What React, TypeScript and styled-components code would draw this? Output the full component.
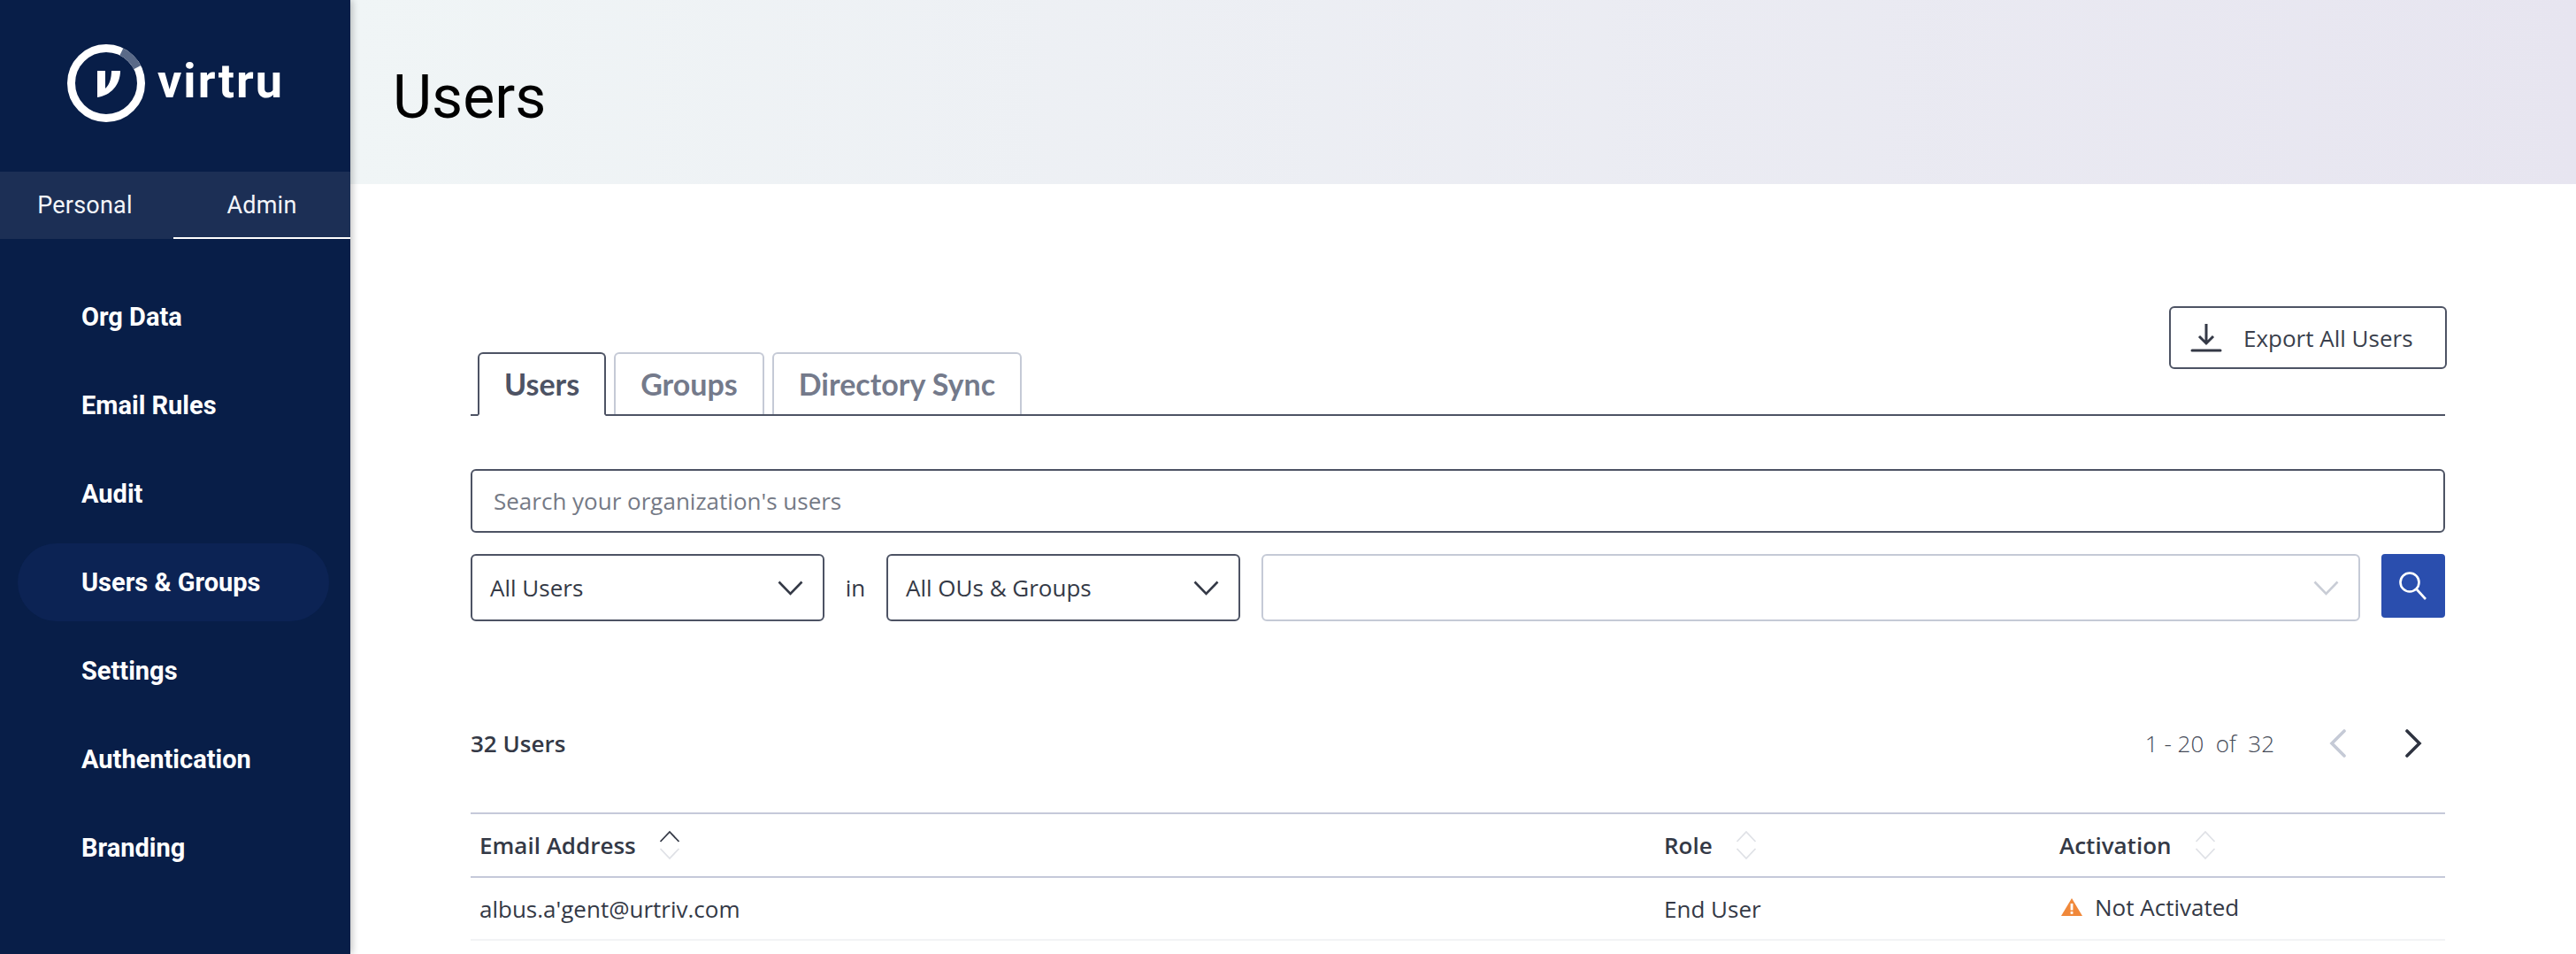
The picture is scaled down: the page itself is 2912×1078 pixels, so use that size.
import React from 'react';
import styled, { createGlobalStyle } from 'styled-components';

const GlobalStyle = createGlobalStyle`
  html, body {
    margin: 0;
    padding: 0;
    height: 100%;
    overflow: hidden;
    background: #fff;
  }
  * { box-sizing: border-box; }
`;

const font = {
  nav: `Roboto, "Liberation Sans", sans-serif`,
  body: `"Open Sans", "Liberation Sans", sans-serif`,
  tab: `Lato, "Open Sans", sans-serif`,
};

const Page = styled.div`
  display: flex;
  width: 2912px;
  height: 1078px;
  overflow: hidden;
`;

const Sidebar = styled.aside`
  position: relative;
  z-index: 1;
  flex: 0 0 396px;
  background: #081e48;
  box-shadow: 2px 0 8px rgba(0, 0, 0, 0.25);
  color: #fff;
`;

const LogoWrap = styled.div`
  display: flex;
  align-items: center;
  height: 194px;
  padding: 0 0 6px 76px;
  gap: 14px;
`;

const Wordmark = styled.span`
  font: 700 54px/1 ${font.nav};
  letter-spacing: 2px;
  color: #fff;
  margin-top: -4px;
`;

const ModeTabs = styled.div`
  display: flex;
  height: 76px;
  background: #1c2f55;
`;

const ModeTab = styled.div<{ $active?: boolean }>`
  flex: 0 0 ${(p) => (p.$active ? '200px' : '192px')};
  display: flex;
  align-items: center;
  justify-content: center;
  padding-top: 2px;
  font: 400 27px/1 ${font.nav};
  letter-spacing: 0.2px;
  color: #f3f5f9;
  border-bottom: 2px solid ${(p) => (p.$active ? '#fff' : 'transparent')};
  margin-left: ${(p) => (p.$active ? '4px' : '0')};
`;

const Nav = styled.nav`
  display: flex;
  flex-direction: column;
  gap: 12px;
  padding: 44px 24px 0 20px;
`;

const NavItem = styled.a<{ $active?: boolean }>`
  display: flex;
  align-items: center;
  height: 88px;
  padding-left: 72px;
  border-radius: 44px;
  background: ${(p) => (p.$active ? '#0c2354' : 'transparent')};
  font: 700 29px/1 ${font.nav};
  color: #fff;
`;

const Main = styled.main`
  flex: 1;
  min-width: 0;
`;

const Header = styled.header`
  display: flex;
  align-items: center;
  height: 208px;
  padding: 11px 0 0 48px;
  background: linear-gradient(90deg, #f0f5f6 0%, #e7e5f0 100%);
`;

const Title = styled.h1`
  margin: 0;
  font: 400 68px/1 ${font.nav};
  color: #000;
`;

const Content = styled.div`
  padding: 138px 148px 0 136px;
`;

const TabRow = styled.div`
  display: flex;
  justify-content: space-between;
  align-items: flex-start;
  height: 124px;
  padding-left: 8px;
  border-bottom: 2px solid #4d5364;
`;

const Tabs = styled.div`
  display: flex;
  gap: 9px;
  margin-top: 52px;
`;

const Tab = styled.div<{ $active?: boolean }>`
  display: flex;
  align-items: center;
  justify-content: center;
  height: ${(p) => (p.$active ? '72px' : '70px')};
  padding: 0 28px;
  border: 2px solid ${(p) => (p.$active ? '#4d5364' : '#c5cad6')};
  border-bottom: ${(p) => (p.$active ? '2px solid #fff' : 'none')};
  border-radius: 6px 6px 0 0;
  background: #fff;
  font: 700 34px/1 ${font.tab};
  color: ${(p) => (p.$active ? '#4d5364' : '#747a8b')};
`;

const ExportButton = styled.button`
  display: flex;
  align-items: center;
  gap: 24px;
  width: 314px;
  height: 71px;
  margin-right: -2px;
  padding: 0 0 0 22px;
  border: 2px solid #4d5364;
  border-radius: 6px;
  background: #fff;
  font: 400 26px/1 ${font.body};
  color: #3a3f4c;
`;

const SearchBox = styled.div`
  display: flex;
  align-items: center;
  height: 72px;
  margin-top: 60px;
  padding-left: 24px;
  border: 2px solid #4d5364;
  border-radius: 6px;
  font: 400 26px/1 ${font.body};
  color: #757a86;
`;

const Filters = styled.div`
  display: flex;
  align-items: flex-start;
  margin-top: 24px;
`;

const Select = styled.div<{ $muted?: boolean; $grow?: boolean }>`
  display: flex;
  align-items: center;
  justify-content: space-between;
  flex: ${(p) => (p.$grow ? '1' : '0 0 400px')};
  height: 76px;
  padding: 0 22px 0 20px;
  border: 2px solid ${(p) => (p.$muted ? '#c5cad6' : '#4d5364')};
  border-radius: 6px;
  font: 400 26px/1 ${font.body};
  color: #343946;
`;

const InLabel = styled.span`
  flex: 0 0 70px;
  font: 400 26px/76px ${font.body};
  text-align: center;
  color: #343946;
`;

const FilterSpacer = styled.span`
  flex: 0 0 24px;
`;

const SearchButton = styled.button`
  display: flex;
  align-items: center;
  justify-content: center;
  flex: 0 0 72px;
  height: 72px;
  margin-left: 24px;
  padding: 0;
  border: 0;
  border-radius: 4px;
  background: #2a4eae;
`;

const MetaRow = styled.div`
  display: flex;
  align-items: center;
  justify-content: space-between;
  height: 72px;
  margin: 102px 0 42px;
  padding-right: 26px;
`;

const Count = styled.span`
  font: 600 26px/1 ${font.body};
  color: #343946;
`;

const Pager = styled.div`
  display: flex;
  align-items: center;
`;

const PagerText = styled.span`
  margin-right: 62px;
  font: 300 26px/1 ${font.body};
  color: #454a57;
`;

const PagerGap = styled.span`
  width: 65px;
`;

const TableRow = styled.div<{ $head?: boolean }>`
  display: grid;
  grid-template-columns: 1339px 447px 1fr;
  align-items: center;
  height: ${(p) => (p.$head ? '74px' : '71px')};
  padding-left: 10px;
  border-top: ${(p) => (p.$head ? '2px solid #c5c9d9' : 'none')};
  border-bottom: 2px solid ${(p) => (p.$head ? '#c5c9d9' : '#f2f3f5')};
`;

const HeadCell = styled.div`
  display: flex;
  align-items: center;
  gap: 26px;
  font: 600 26px/1 ${font.body};
  color: #343946;
`;

const Cell = styled.div`
  font: 400 26px/1 ${font.body};
  color: #343946;
`;

const StatusCell = styled(Cell)`
  display: flex;
  align-items: center;
  gap: 14px;
  margin-top: -3px;
  padding-left: 2px;
`;

const Chevron = ({ color }: { color: string }) => (
  <svg width="29" height="17" viewBox="0 0 29 17" fill="none">
    <path d="M1.5 1.5 L14.5 15 L27.5 1.5" stroke={color} strokeWidth="2.6" />
  </svg>
);

const SortIcon = ({ up }: { up?: boolean }) => (
  <svg width="24" height="34" viewBox="0 0 24 34" fill="none">
    <path d="M1.5 13 L12 2 L22.5 13" stroke={up ? '#343946' : '#dfe1e6'} strokeWidth="1.8" />
    <path d="M1.5 21 L12 32 L22.5 21" stroke="#dfe1e6" strokeWidth="1.8" />
  </svg>
);

const Logo = () => (
  <svg width="88" height="88" viewBox="0 0 88 88" fill="none">
    <circle cx="44" cy="44" r="39.5" stroke="#fff" strokeWidth="9" />
    <path d="M61.35 8.5 A39.5 39.5 0 0 1 79.2 26.15" stroke="#5a6a88" strokeWidth="9" />
    <path d="M34 30 H43 V50 C48 46 50 38 50 30 H60 C60 46 49 58 34 60 Z" fill="#fff" />
  </svg>
);

const ExportIcon = () => (
  <svg width="36" height="34" viewBox="0 0 36 34" fill="none">
    <path d="M18 1 V22 M10 15 L18 23 L26 15" stroke="#343946" strokeWidth="3" />
    <path d="M2 31 H34" stroke="#343946" strokeWidth="3" strokeLinecap="round" />
  </svg>
);

const SearchIcon = () => (
  <svg width="34" height="34" viewBox="0 0 34 34" fill="none">
    <circle cx="13" cy="13" r="10.5" stroke="#fff" strokeWidth="2.6" />
    <path d="M20.5 20.5 L31 32" stroke="#fff" strokeWidth="2.6" />
  </svg>
);

const PagerArrow = ({ dir, color }: { dir: 'left' | 'right'; color: string }) => (
  <svg width="20" height="32" viewBox="0 0 20 32" fill="none">
    <path
      d={dir === 'left' ? 'M17 2 L3 16 L17 30' : 'M3 2 L17 16 L3 30'}
      stroke={color}
      strokeWidth="3.6"
      strokeLinecap="round"
    />
  </svg>
);

const WarningIcon = () => (
  <svg width="24" height="20" viewBox="0 0 24 20">
    <path d="M12 0 L24 20 H0 Z" fill="#f0883a" />
    <rect x="10.6" y="6" width="2.8" height="7.5" fill="#fff" />
    <rect x="10.6" y="15" width="2.8" height="2.8" fill="#fff" />
  </svg>
);

const navItems = ['Org Data', 'Email Rules', 'Audit', 'Users & Groups', 'Settings', 'Authentication', 'Branding'];

const App: React.FC = () => (
  <Page>
    <GlobalStyle />
    <Sidebar>
      <LogoWrap>
        <Logo />
        <Wordmark>virtru</Wordmark>
      </LogoWrap>
      <ModeTabs>
        <ModeTab>Personal</ModeTab>
        <ModeTab $active>Admin</ModeTab>
      </ModeTabs>
      <Nav>
        {navItems.map((item) => (
          <NavItem key={item} $active={item === 'Users & Groups'}>{item}</NavItem>
        ))}
      </Nav>
    </Sidebar>
    <Main>
      <Header>
        <Title>Users</Title>
      </Header>
      <Content>
        <TabRow>
          <Tabs>
            <Tab $active>Users</Tab>
            <Tab>Groups</Tab>
            <Tab>Directory Sync</Tab>
          </Tabs>
          <ExportButton>
            <ExportIcon />
            Export All Users
          </ExportButton>
        </TabRow>
        <SearchBox>Search your organization's users</SearchBox>
        <Filters>
          <Select>
            All Users
            <Chevron color="#343946" />
          </Select>
          <InLabel>in</InLabel>
          <Select>
            All OUs &amp; Groups
            <Chevron color="#343946" />
          </Select>
          <FilterSpacer />
          <Select $muted $grow>
            <span />
            <Chevron color="#c9cdd6" />
          </Select>
          <SearchButton>
            <SearchIcon />
          </SearchButton>
        </Filters>
        <MetaRow>
          <Count>32 Users</Count>
          <Pager>
            <PagerText>1 - 20 &nbsp;of&nbsp; 32</PagerText>
            <PagerArrow dir="left" color="#c5cad6" />
            <PagerGap />
            <PagerArrow dir="right" color="#2e3340" />
          </Pager>
        </MetaRow>
        <TableRow $head>
          <HeadCell>
            Email Address
            <SortIcon up />
          </HeadCell>
          <HeadCell>
            Role
            <SortIcon />
          </HeadCell>
          <HeadCell>
            Activation
            <SortIcon />
          </HeadCell>
        </TableRow>
        <TableRow>
          <Cell>albus.a'gent@urtriv.com</Cell>
          <Cell>End User</Cell>
          <StatusCell>
            <WarningIcon />
            Not Activated
          </StatusCell>
        </TableRow>
      </Content>
    </Main>
  </Page>
);

export default App;
